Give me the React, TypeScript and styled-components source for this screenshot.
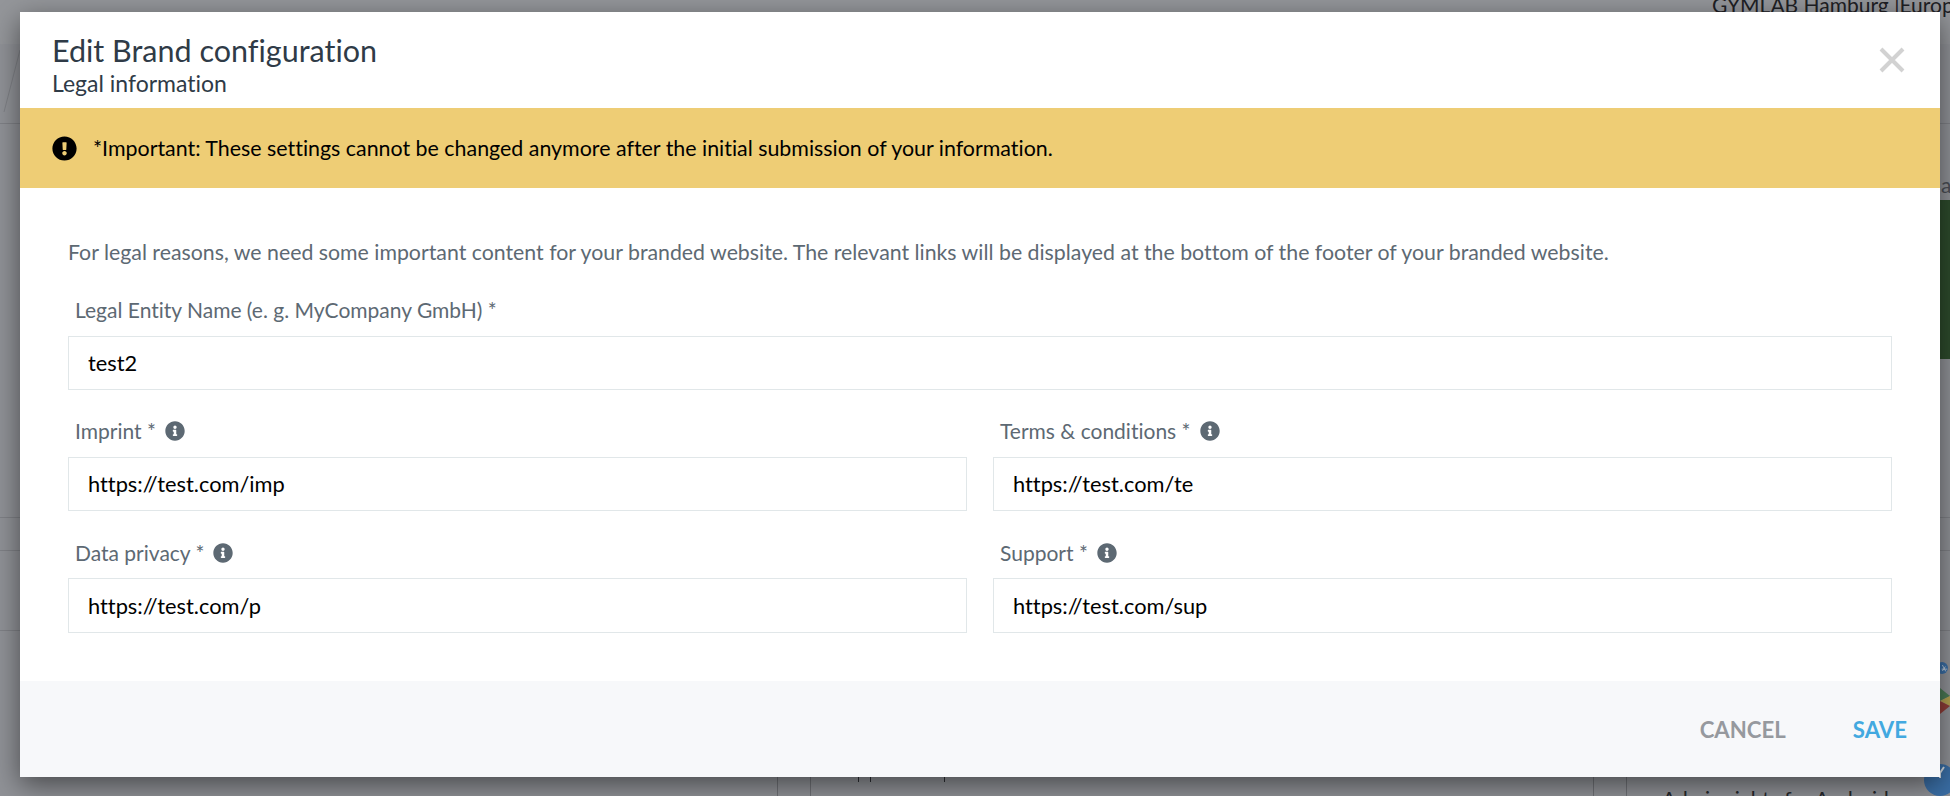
import React from 'react';
import styled, { createGlobalStyle } from 'styled-components';
import { FaExclamationCircle, FaInfoCircle } from 'react-icons/fa';

const GlobalStyle = createGlobalStyle`
  html, body {
    margin: 0;
    padding: 0;
    overflow: hidden;
  }
  * {
    box-sizing: border-box;
  }
`;

const fields = [
  { label: 'Imprint *', value: 'https://test.com/imp' },
  { label: 'Terms & conditions *', value: 'https://test.com/te' },
  { label: 'Data privacy *', value: 'https://test.com/p' },
  { label: 'Support *', value: 'https://test.com/sup' },
];

function App() {
  return (
    <Page>
      <GlobalStyle />
      <DimmedPage>
        <TopBand>
          <Location>GYMLAB Hamburg |Europe</Location>
        </TopBand>
        <RuledRow $height={80}>
          <svg width="20" height="70" viewBox="0 0 20 70">
            <path d="M4 68 L20 6" stroke="#7f8186" strokeWidth="1" fill="none" />
          </svg>
        </RuledRow>
        <ContentRow>
          <EdgeLetter>a</EdgeLetter>
          <GreenTile />
        </ContentRow>
        <RuledRow $height={33} />
        <RuledRow $height={80} />
        <BottomRow>
          <LeftGap />
          <Lane />
          <Ticks>
            <Tick />
            <Tick />
            <Tick $far />
          </Ticks>
          <Lane />
          <AdminRights>Admin rights for Android</AdminRights>
          <BadgeColumn>
            <svg width="32" height="32" viewBox="0 0 32 32">
              <circle cx="16" cy="16" r="16" fill="#3a6ea5" />
              <path d="M17 8 L26 25 M17 24 L25 12 M15 19 L30 19" stroke="#d5dce2" strokeWidth="2" fill="none" />
            </svg>
            <PlayShape width="10" height="26" viewBox="0 0 10 26">
              <path d="M0 0 L10 8 L0 13 Z" fill="#4a7a55" />
              <path d="M0 13 L10 8 L10 18 Z" fill="#b3a04f" />
              <path d="M0 13 L10 18 L0 26 Z" fill="#8f3d38" />
            </PlayShape>
            <LastBadge width="32" height="32" viewBox="0 0 32 32">
              <circle cx="16" cy="16" r="16" fill="#3a6ea5" />
              <path d="M12 3 L16 9 L20 3 M16 9 L16 14" stroke="#d5dce2" strokeWidth="2" fill="none" />
            </LastBadge>
          </BadgeColumn>
        </BottomRow>
      </DimmedPage>

      <Modal>
        <ModalHeader>
          <div>
            <Title>Edit Brand configuration</Title>
            <SubTitle>Legal information</SubTitle>
          </div>
          <CloseButton aria-label="Close">
            <svg width="26" height="26" viewBox="0 0 26 26">
              <path d="M2 2 L24 24 M24 2 L2 24" stroke="#d2d2d2" strokeWidth="4" fill="none" />
            </svg>
          </CloseButton>
        </ModalHeader>

        <WarningBar>
          <FaExclamationCircle size={25} color="#000" />
          <WarningText>*Important: These settings cannot be changed anymore after the initial submission of your information.</WarningText>
        </WarningBar>

        <ModalBody>
          <Intro>
            For legal reasons, we need some important content for your branded website. The relevant links will be displayed at the bottom of the footer of your branded website.
          </Intro>
          <Field>
            <FieldLabel>Legal Entity Name (e. g. MyCompany GmbH) *</FieldLabel>
            <FieldInput readOnly value="test2" />
          </Field>
          <FieldGrid>
            {fields.map((field) => (
              <Field key={field.label}>
                <FieldLabel>
                  {field.label}
                  <FaInfoCircle size={20} color="#5d6973" />
                </FieldLabel>
                <FieldInput readOnly value={field.value} />
              </Field>
            ))}
          </FieldGrid>
        </ModalBody>

        <ModalFooter>
          <FooterButton>CANCEL</FooterButton>
          <FooterButton $primary>SAVE</FooterButton>
        </ModalFooter>
      </Modal>
    </Page>
  );
}

export default App;

const Page = styled.div`
  position: relative;
  width: 1950px;
  height: 796px;
  padding: 12px 10px 0 20px;
  overflow: hidden;
  background: #909297;
  font-family: 'Lato', 'Open Sans', sans-serif;
  font-variant-ligatures: none;
`;

/* the page behind the dialog, only its edges show */
const DimmedPage = styled.div`
  position: absolute;
  inset: 0;
  display: flex;
  flex-direction: column;
`;

const TopBand = styled.div`
  display: flex;
  flex: none;
  height: 44px;
  padding-left: 1712px;
  background: #94969a;
`;

const Location = styled.div`
  margin-top: -8px;
  font-size: 21px;
  line-height: 26px;
  color: #1e2024;
  white-space: nowrap;
`;

const RuledRow = styled.div<{ $height: number }>`
  flex: none;
  height: ${(p) => p.$height}px;
  border-bottom: 1px solid #7f8186;
`;

const ContentRow = styled.div`
  display: flex;
  flex: none;
  flex-direction: column;
  align-items: flex-end;
  height: 394px;
  padding-top: 48px;
  border-bottom: 1px solid #7f8186;
`;

const EdgeLetter = styled.div`
  width: 9px;
  height: 28px;
  overflow: hidden;
  font-size: 21px;
  line-height: 26px;
  color: #4b4e55;
`;

const GreenTile = styled.div`
  width: 20px;
  height: 159px;
  background: #2d4b2c;
`;

const BottomRow = styled.div`
  display: flex;
  flex: 1;
  min-height: 0;
`;

const LeftGap = styled.div`
  flex: none;
  width: 777px;
`;

const Lane = styled.div`
  flex: none;
  width: 34px;
  border-left: 1px solid #6f7176;
  border-right: 1px solid #6f7176;
`;

const Ticks = styled.div`
  display: flex;
  flex: none;
  align-items: flex-start;
  gap: 11px;
  width: 782px;
  padding: 146px 0 0 47px;
`;

const Tick = styled.div<{ $far?: boolean }>`
  width: 1px;
  height: 5px;
  margin-left: ${(p) => (p.$far ? '62px' : '0')};
  background: #2c2e33;
`;

const AdminRights = styled.div`
  flex: 1;
  padding: 155px 0 0 35px;
  font-size: 21px;
  line-height: 26px;
  color: #26282c;
  white-space: nowrap;
`;

const BadgeColumn = styled.div`
  display: flex;
  flex: none;
  flex-direction: column;
  width: 24px;
  padding-top: 31px;
`;

const PlayShape = styled.svg`
  flex: none;
  margin: 14px 0 0 14px;
`;

const LastBadge = styled.svg`
  flex: none;
  margin: 50px 0 0 -2px;
`;

const Modal = styled.div`
  position: relative;
  display: flex;
  flex-direction: column;
  width: 1920px;
  background: #fff;
  box-shadow: 0 8px 26px rgba(0, 0, 0, 0.5);
`;

const ModalHeader = styled.div`
  display: flex;
  justify-content: space-between;
  height: 96px;
  padding: 20px 35px 0 32px;
`;

const Title = styled.div`
  font-size: 30.5px;
  line-height: 36px;
  color: #2f3b47;
`;

const SubTitle = styled.div`
  margin-top: 2px;
  font-size: 23px;
  line-height: 26px;
  color: #2f3b47;
`;

const CloseButton = styled.button`
  width: 26px;
  height: 26px;
  margin-top: 15px;
  padding: 0;
  border: 0;
  background: none;
  cursor: pointer;
`;

const WarningBar = styled.div`
  display: flex;
  align-items: center;
  gap: 16px;
  height: 80px;
  padding-left: 32px;
  background: #eecd75;
`;

const WarningText = styled.span`
  font-size: 21.4px;
  color: #000;
`;

const ModalBody = styled.div`
  height: 493px;
  padding: 51px 48px 0;
`;

const Intro = styled.p`
  margin: 0 0 32px;
  font-size: 21.3px;
  line-height: 26px;
  color: #5d6973;
`;

const Field = styled.div`
  display: flex;
  flex-direction: column;
`;

const FieldLabel = styled.label`
  display: flex;
  align-items: center;
  gap: 9px;
  height: 26px;
  margin-bottom: 12.5px;
  padding-left: 7px;
  font-size: 21px;
  line-height: 26px;
  color: #5d6973;
`;

const FieldInput = styled.input`
  width: 100%;
  height: 54.5px;
  padding: 0 19px;
  border: 1px solid #e1e7e9;
  outline: 0;
  background: #fff;
  font-family: inherit;
  font-variant-ligatures: none;
  font-size: 21.8px;
  color: #000;
`;

const FieldGrid = styled.div`
  display: grid;
  grid-template-columns: 1fr 1fr;
  column-gap: 26px;
  row-gap: 28.5px;
  margin-top: 28px;
`;

const ModalFooter = styled.div`
  display: flex;
  justify-content: flex-end;
  align-items: center;
  gap: 67px;
  height: 96px;
  padding: 0 33px 0 0;
  background: #f7f8fa;
`;

const FooterButton = styled.button<{ $primary?: boolean }>`
  padding: 0;
  border: 0;
  background: none;
  font-family: inherit;
  font-size: 22.2px;
  font-weight: 700;
  color: ${(p) => (p.$primary ? '#42a9e0' : '#96999e')};
  cursor: pointer;
`;
